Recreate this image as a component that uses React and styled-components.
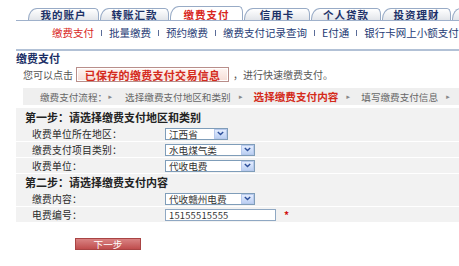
import React from "react"
import styled, { createGlobalStyle } from "styled-components"

const GlobalStyle = createGlobalStyle`
  html, body {
    margin: 0;
    padding: 0;
    background: #ffffff;
  }
  body {
    width: 459px;
    height: 266px;
    overflow: hidden;
    font-family: "Noto Sans CJK SC", "Noto Sans", sans-serif;
  }
`

const Page = styled.div`
  width: 443px;
  height: 266px;
  padding-left: 16px;
  white-space: nowrap;
  overflow: hidden;
`

const TabBar = styled.div`
  display: flex;
  align-items: flex-end;
  gap: 1px;
  height: 20px;
  padding-left: 12px;
  border-bottom: 1px solid #9fb1cb;
  overflow: hidden;
`

const Tab = styled.div`
  flex: 0 0 ${({ $w }) => $w}px;
  box-sizing: border-box;
  height: ${({ $active }) => ($active ? 15 : 12)}px;
  margin-bottom: ${({ $active }) => ($active ? -1 : 0)}px;
  padding-top: ${({ $active }) => ($active ? 1 : 0)}px;
  border: 1px solid #98abc6;
  border-bottom: none;
  border-radius: 9px 4px 0 0 / 11px 6px 0 0;
  background: ${({ $active }) =>
    $active ? "#ffffff" : "linear-gradient(#ffffff, #e2e5ea)"};
  color: ${({ $active }) => ($active ? "#d8261d" : "#1c3168")};
  font-size: 10.5px;
  font-weight: bold;
  letter-spacing: 1px;
  line-height: 11px;
  display: flex;
  align-items: center;
  justify-content: center;
`

const SubNav = styled.div`
  display: flex;
  align-items: center;
  height: 22px;
  padding-left: 36px;
  font-size: 10.5px;
  color: #243a74;
`

const SubItem = styled.span`
  color: ${({ $active }) => ($active ? "#d8261d" : "#243a74")};
`

const Sep = styled.span`
  display: inline-block;
  width: 1px;
  height: 6px;
  margin: 1px 7px 0;
  background: #5a6c98;
`

const Divider = styled.div`
  margin-top: 6px;
  height: 2px;
  background: #b2c1d6;
`

const Title = styled.div`
  height: 12px;
  line-height: 12px;
  margin-top: 1px;
  font-size: 11px;
  font-weight: bold;
  color: #1b2f66;
`

const QuickRow = styled.div`
  display: flex;
  align-items: center;
  height: 15px;
  margin-top: 3px;
  padding-left: 7px;
  font-size: 10px;
  color: #555555;
`

const SavedButton = styled.span`
  display: inline-flex;
  align-items: center;
  justify-content: center;
  box-sizing: border-box;
  width: 153px;
  height: 15px;
  margin: 0 4px 0 3px;
  border: 1px solid #b98e8a;
  box-shadow: inset 0 0 0 1px #ffffff;
  background: linear-gradient(#fff6f3, #f6ddd6);
  color: #d42a1c;
  font-size: 11px;
  font-weight: bold;
  letter-spacing: 0.3px;
`

const FlowBar = styled.div`
  display: flex;
  align-items: center;
  height: 17px;
  margin: 6px 0 0 7px;
  padding-left: 17px;
  background: #efefef;
  font-size: 9.6px;
  color: #666666;
`

const FlowArrow = styled.span`
  font-size: 6px;
  color: #888888;
  margin: 0 ${({ $r }) => $r ?? 10}px 0 ${({ $l }) => $l ?? 7}px;
`

const FlowCurrent = styled.span`
  color: #d42a1a;
  font-weight: bold;
  font-size: 10.6px;
`

const Panel = styled.div`
  margin-top: 3px;
  background: #f2f2f2;
`

const StepTitle = styled.div`
  height: ${({ $h }) => $h}px;
  line-height: ${({ $h }) => $h}px;
  padding-left: 9px;
  font-size: 11px;
  font-weight: bold;
  color: #222222;
`

const Row = styled.div`
  display: flex;
  align-items: center;
  height: 15px;
  padding-left: 16px;
  border-bottom: 1px solid #ffffff;
  &:last-child {
    border-bottom: none;
  }
`

const Label = styled.span`
  flex: 0 0 133px;
  font-size: 9.8px;
  color: #2a2a2a;
  letter-spacing: 0.2px;
`

const SelectBox = styled.div`
  display: flex;
  align-items: center;
  box-sizing: border-box;
  width: ${({ $w }) => $w}px;
  height: 12px;
  border: 1px solid #7f9db9;
  background: #ffffff;
  font-size: 9.6px;
  color: #333333;
  padding-left: 3px;
`

const SelectText = styled.span`
  flex: 1;
  line-height: 10px;
`

const ArrowBox = styled.span`
  display: flex;
  align-items: center;
  justify-content: center;
  box-sizing: border-box;
  width: 13px;
  height: 10px;
  border: 1px solid #b7c9ec;
  background: linear-gradient(#e3ecfd, #bcd0f3);
`

const TextInput = styled.div`
  box-sizing: border-box;
  width: 111px;
  height: 12px;
  border: 1px solid #8fa8c3;
  background: #ffffff;
  padding-left: 3px;
  font-size: 9.4px;
  line-height: 10px;
  color: #333333;
  letter-spacing: 0.2px;
`

const Required = styled.span`
  margin-left: 8px;
  color: #d01010;
  font-size: 10px;
  font-weight: bold;
`

const NextButton = styled.div`
  box-sizing: border-box;
  width: 66px;
  height: 12px;
  margin: 16px 0 0 59px;
  border: 1px solid #a94444;
  background: linear-gradient(#d98383, #bf4d4d);
  color: #ffffff;
  font-size: 9.6px;
  line-height: 10px;
  text-align: center;
`

const Chevron = () => (
  <svg width="7" height="5" viewBox="0 0 7 5">
    <path d="M0.8 1 L3.5 3.6 L6.2 1" fill="none" stroke="#2d4f9a" strokeWidth="1.4" />
  </svg>
)

const Select = ({ w, children }) => (
  <SelectBox $w={w}>
    <SelectText>{children}</SelectText>
    <ArrowBox>
      <Chevron />
    </ArrowBox>
  </SelectBox>
)

const tabs = [
  { label: "我的账户", w: 71 },
  { label: "转账汇款", w: 69 },
  { label: "缴费支付", w: 73, active: true },
  { label: "信用卡", w: 66 },
  { label: "个人贷款", w: 70 },
  { label: "投资理财", w: 69 },
  { label: "", w: 60 },
]

const subNav = ["缴费支付", "批量缴费", "预约缴费", "缴费支付记录查询", "E付通", "银行卡网上小额支付"]

export default function App() {
  return (
    <>
      <GlobalStyle />
      <Page>
        <TabBar>
          {tabs.map((t, i) => (
            <Tab key={i} $w={t.w} $active={t.active}>
              {t.label}
            </Tab>
          ))}
        </TabBar>

        <SubNav>
          {subNav.map((s, i) => (
            <React.Fragment key={s}>
              {i > 0 && <Sep />}
              <SubItem $active={i === 0}>{s}</SubItem>
            </React.Fragment>
          ))}
        </SubNav>

        <Divider />
        <Title>缴费支付</Title>

        <QuickRow>
          您可以点击
          <SavedButton>已保存的缴费支付交易信息</SavedButton>
          ，进行快速缴费支付。
        </QuickRow>

        <FlowBar>
          缴费支付流程：
          <FlowArrow $l={0} $r={12}>►</FlowArrow>
          选择缴费支付地区和类别
          <FlowArrow>►</FlowArrow>
          <FlowCurrent>选择缴费支付内容</FlowCurrent>
          <FlowArrow>►</FlowArrow>
          填写缴费支付信息
          <FlowArrow>►</FlowArrow>
        </FlowBar>

        <Panel>
          <StepTitle $h={18}>第一步：请选择缴费支付地区和类别</StepTitle>
          <Row>
            <Label>收费单位所在地区：</Label>
            <Select w={63}>江西省</Select>
          </Row>
          <Row>
            <Label>缴费支付项目类别：</Label>
            <Select w={90}>水电煤气类</Select>
          </Row>
          <Row>
            <Label>收费单位：</Label>
            <Select w={90}>代收电费</Select>
          </Row>
          <StepTitle $h={17}>第二步：请选择缴费支付内容</StepTitle>
          <Row>
            <Label>缴费内容：</Label>
            <Select w={90}>代收赣州电费</Select>
          </Row>
          <Row>
            <Label>电费编号：</Label>
            <TextInput>15155515555</TextInput>
            <Required>*</Required>
          </Row>
        </Panel>

        <NextButton>下一步</NextButton>
      </Page>
    </>
  )
}
